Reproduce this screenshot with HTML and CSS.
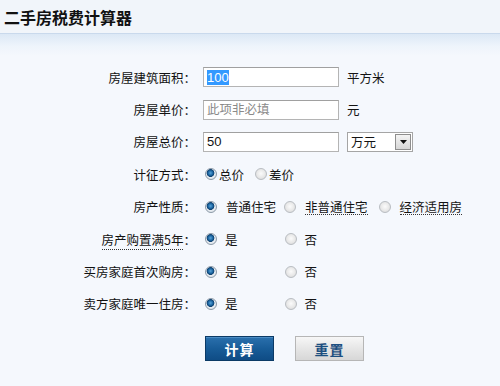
FILE: index.html
```html
<!DOCTYPE html>
<html lang="zh">
<head>
<meta charset="utf-8">
<title>二手房税费计算器</title>
<link rel="stylesheet" href="styles.css">
</head>
<body>
<div class="header"><h1 class="title">二手房税费计算器</h1></div>
<div class="main">
  <div class="form">
    <div class="label">房屋建筑面积：</div>
    <div class="value"><input class="text sel" id="area" type="text" value="100"><span class="unit">平方米</span></div>

    <div class="label">房屋单价：</div>
    <div class="value"><input class="text" type="text" placeholder="此项非必填"><span class="unit">元</span></div>

    <div class="label">房屋总价：</div>
    <div class="value"><input class="text" type="text" value="50"><span class="select"><span class="select-text">万元</span><span class="select-btn"><svg width="7" height="4" viewBox="0 0 7 4"><path d="M0 0h7L3.5 4z" fill="#111"/></svg></span></span></div>

    <div class="label">计征方式：</div>
    <div class="value tight"><input class="radio" type="radio" name="m" checked><span class="opt">总价</span><input class="radio r2" type="radio" name="m"><span class="opt">差价</span></div>

    <div class="label">房产性质：</div>
    <div class="value nature"><input class="radio" type="radio" name="n" checked><span class="opt o1">普通住宅</span><input class="radio" type="radio" name="n"><span class="opt dot o2">非普通住宅</span><input class="radio" type="radio" name="n"><span class="opt dot">经济适用房</span></div>

    <div class="label"><span class="dot">房产购置满5年</span>：</div>
    <div class="value yn"><input class="radio" type="radio" name="a" checked><span class="opt yes">是</span><input class="radio" type="radio" name="a"><span class="opt">否</span></div>

    <div class="label">买房家庭首次购房：</div>
    <div class="value yn"><input class="radio" type="radio" name="b" checked><span class="opt yes">是</span><input class="radio" type="radio" name="b"><span class="opt">否</span></div>

    <div class="label">卖方家庭唯一住房：</div>
    <div class="value yn"><input class="radio" type="radio" name="c" checked><span class="opt yes">是</span><input class="radio" type="radio" name="c"><span class="opt">否</span></div>
  </div>
  <div class="buttons">
    <button class="btn btn-calc" type="button">计算</button>
    <button class="btn btn-reset" type="button">重置</button>
  </div>
</div>
<script src="app.js"></script>
</body>
</html>
```
FILE: styles.css
```css
html, body {
  margin: 0;
  padding: 0;
}
body {
  width: 500px;
  height: 386px;
  overflow: hidden;
  background: #f5f8fd;
  font-family: "Liberation Sans", "Noto Sans CJK SC", sans-serif;
  font-size: 12.5px;
  color: #141414;
}
.header {
  height: 33px;
  border-bottom: 1px solid #c9d9ec;
  background: #f1f5fa;
  padding-left: 4px;
}
.title {
  margin: 0;
  font-size: 16px;
  font-weight: bold;
  line-height: 34px;
  color: #111;
  font-family: "Noto Sans CJK SC", sans-serif;
}
.main {
  height: 352px;
  background: linear-gradient(#dce8f5 0, #eef4fb 12px, #f5f8fd 22px, #f5f8fd 100%);
  padding-top: 27px;
  box-sizing: border-box;
}
.form {
  display: grid;
  grid-template-columns: 196px 1fr;
  grid-auto-rows: 32.4px;
  align-items: center;
}
.label {
  text-align: right;
  font-family: "Noto Sans CJK SC", sans-serif;
  white-space: nowrap;
  color: #111;
}
.value {
  display: flex;
  align-items: center;
  padding-left: 7px;
  font-family: "Noto Sans CJK SC", sans-serif;
}
.text {
  width: 136px;
  height: 20px;
  box-sizing: border-box;
  border: 1px solid #b4b4b4;
  border-top-color: #a0a0a0;
  background: #fff;
  padding: 0 3px;
  margin: 0;
  font-family: "Liberation Sans", "Noto Sans CJK SC", sans-serif;
  font-size: 13px;
  color: #111;
  outline: none;
  caret-color: transparent;
}
.text::placeholder {
  color: #8a8a8a;
  font-family: "Noto Sans CJK SC", sans-serif;
  font-size: 12.5px;
}
.sel::selection {
  background: #3399ff;
  color: #fff;
}
.unit {
  margin-left: 8px;
}
.select {
  margin-left: 8px;
  width: 66px;
  height: 20px;
  box-sizing: border-box;
  border: 1px solid #a5a5a5;
  background: #fff;
  display: flex;
  align-items: center;
  justify-content: space-between;
}
.select-text {
  padding-left: 3px;
}
.select-btn {
  width: 16px;
  height: 16px;
  margin-right: 1px;
  box-sizing: border-box;
  border: 1px solid #8e8e8e;
  background: linear-gradient(#f4f4f4, #d6d6d6);
  display: flex;
  align-items: center;
  justify-content: center;
}
.radio {
  appearance: none;
  -webkit-appearance: none;
  width: 12px;
  height: 12px;
  margin: 0;
  border-radius: 50%;
  box-sizing: border-box;
  border: 1px solid #b9bdc2;
  background: radial-gradient(circle at 50% 45%, #fbfbfb 0, #e8e8e8 55%, #d2d2d2 100%);
  flex: none;
}
.radio:checked {
  border-color: #8c9aa8;
  background: radial-gradient(circle at 45% 40%, #5aa4d8 0, #1f6aa6 2.2px, #0c3f6e 3.6px, #e9eef3 4.2px, #d5dbe1 100%);
}
.opt {
  margin-left: 2px;
}
.tight .radio:first-child {
  margin-left: 2px;
}
.tight .r2 {
  margin-left: 11px;
}
.nature .radio:first-child {
  margin-left: 2px;
}
.nature .opt {
  margin-left: 9px;
}
.nature .o1 {
  margin-right: 8px;
}
.nature .o2 {
  margin-right: 11px;
}
.dot {
  border-bottom: 1px dotted #333;
  line-height: 15px;
}
.yn .radio:first-child {
  margin-left: 2px;
}
.yn .opt {
  margin-left: 8px;
}
.yn .yes {
  margin-right: 47px;
}
.buttons {
  display: flex;
  gap: 21px;
  padding-left: 205px;
  margin-top: 16px;
}
.btn {
  width: 69px;
  height: 25px;
  margin: 0;
  padding: 0;
  box-sizing: border-box;
  font-family: "Noto Sans CJK SC", sans-serif;
  font-size: 14px;
  font-weight: bold;
  letter-spacing: 1px;
  cursor: pointer;
}
.btn-calc {
  color: #fff;
  border: 1px solid #0b3a66;
  background: linear-gradient(#2a70ad 0, #185c98 50%, #0f4c85 100%);
  box-shadow: inset 0 1px 0 #4a8cc4;
}
.btn-reset {
  color: #1d4f80;
  border: 1px solid #b6b6b6;
  background: linear-gradient(#f7f7f7 0, #e6e6e6 50%, #d7d7d7 100%);
}
```
FILE: app.js
```js
var area = document.getElementById('area');
area.focus();
area.select();
```
